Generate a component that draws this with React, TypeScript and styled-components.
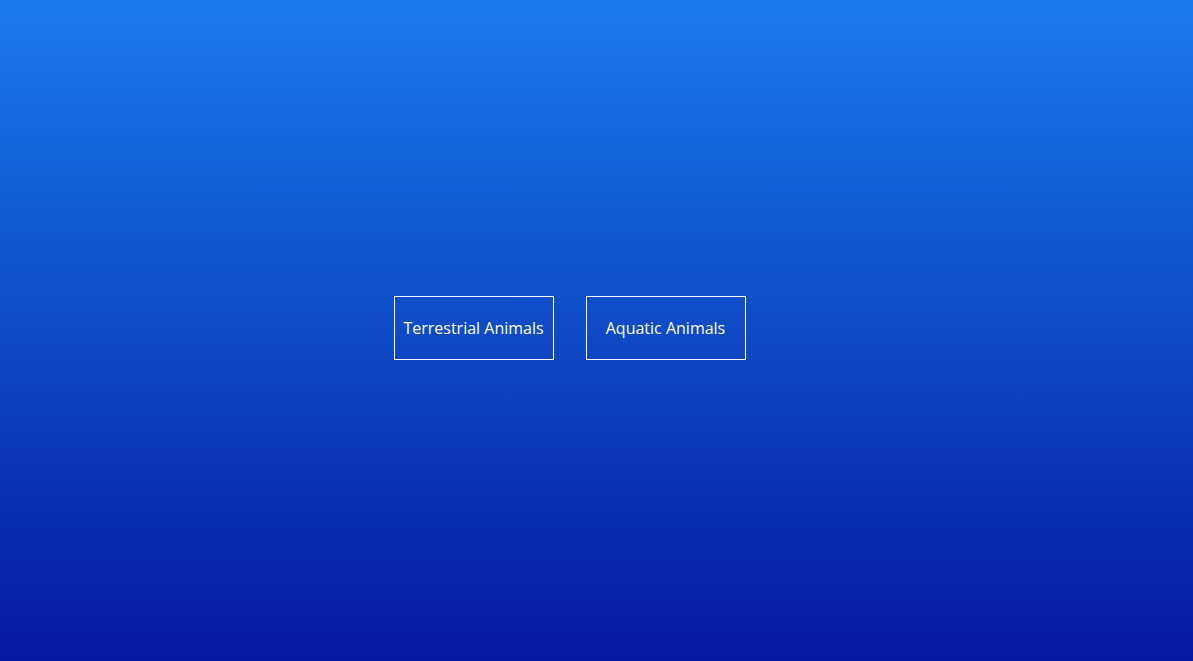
import React from "react";
import styled, { createGlobalStyle } from "styled-components";

const GlobalStyle = createGlobalStyle`
  html, body {
    margin: 0;
    padding: 0;
    height: 100%;
  }
  #root {
    height: 100%;
  }
`;

const Page = styled.div`
  height: 100vh;
  background: linear-gradient(180deg, #1a7bed 0%, #0419a0 100%);
  display: flex;
  align-items: center;
  justify-content: center;
  padding: 0 54px 6px 0;
  box-sizing: border-box;
  font-family: "Segoe UI", "Open Sans", "Noto Sans", sans-serif;
`;

const Choices = styled.div`
  display: flex;
  gap: 32px;
`;

const Choice = styled.button`
  width: 160px;
  height: 64px;
  background: transparent;
  border: 1px solid #ffffff;
  color: #ffffff;
  font-family: inherit;
  font-size: 16px;
  padding: 0;
  cursor: pointer;
  white-space: nowrap;

  &:hover {
    background: rgba(255, 255, 255, 0.1);
  }
`;

const App = (): JSX.Element => (
  <>
    <GlobalStyle />
    <Page>
      <Choices>
        <Choice>Terrestrial Animals</Choice>
        <Choice>Aquatic Animals</Choice>
      </Choices>
    </Page>
  </>
);

export default App;
